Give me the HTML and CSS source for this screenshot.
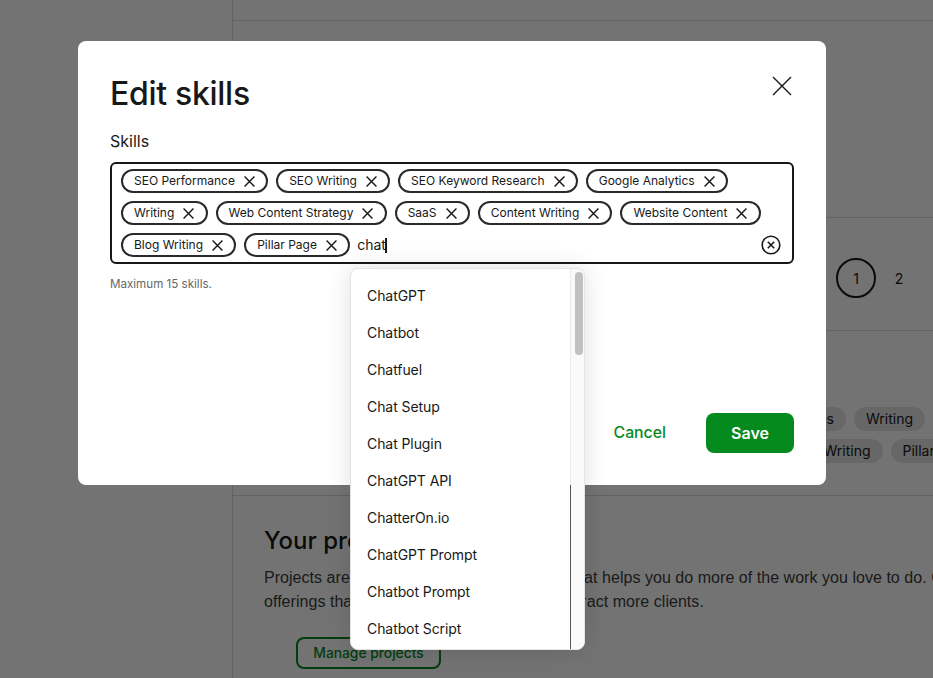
FILE: index.html
```html
<!DOCTYPE html>
<html lang="en">
<head>
<meta charset="utf-8">
<title>Edit skills</title>
<link rel="stylesheet" href="styles.css">
</head>
<body>
<div class="page">
  <aside class="side"></aside>
  <main class="main">
    <section class="sec sec-top"></section>
    <section class="sec sec-a"></section>
    <section class="sec sec-pager">
      <span class="pg pg-on">1</span>
      <span class="pg">2</span>
    </section>
    <section class="sec sec-tags">
      <div class="bg-row bg-row-1">
        <span class="bg-tag">Google Analytics</span>
        <span class="bg-tag">Writing</span>
      </div>
      <div class="bg-row bg-row-2">
        <span class="bg-tag">Blog Writing</span>
        <span class="bg-tag">Pillar Page</span>
      </div>
    </section>
    <section class="sec sec-projects">
      <h2 class="proj-title">Your projects</h2>
      <p class="proj-text">Projects are a new way to earn on Upwork that helps you do more of the work you love to do. Create project<br>offerings that highlight your strengths and attract more clients.</p>
      <a class="btn-outline">Manage projects</a>
    </section>
  </main>
</div>
<div class="overlay"></div>
<div class="modal" role="dialog" aria-label="Edit skills">
  <header class="modal-head">
    <h1 class="modal-title">Edit skills</h1>
    <button class="close" aria-label="Close">
      <svg width="20" height="20" viewBox="0 0 20 20"><path d="M1 1l18 18M19 1L1 19" fill="none" stroke="#181818" stroke-width="1.4"/></svg>
    </button>
  </header>
  <label class="label">Skills</label>
  <div class="box">
    <div class="chips">
      <span class="chip">SEO Performance<svg class="x" viewBox="0 0 10 10"><path d="M.5.5l9 9M9.5.5l-9 9"/></svg></span>
      <span class="chip">SEO Writing<svg class="x" viewBox="0 0 10 10"><path d="M.5.5l9 9M9.5.5l-9 9"/></svg></span>
      <span class="chip">SEO Keyword Research<svg class="x" viewBox="0 0 10 10"><path d="M.5.5l9 9M9.5.5l-9 9"/></svg></span>
      <span class="chip">Google Analytics<svg class="x" viewBox="0 0 10 10"><path d="M.5.5l9 9M9.5.5l-9 9"/></svg></span>
      <span class="chip">Writing<svg class="x" viewBox="0 0 10 10"><path d="M.5.5l9 9M9.5.5l-9 9"/></svg></span>
      <span class="chip">Web Content Strategy<svg class="x" viewBox="0 0 10 10"><path d="M.5.5l9 9M9.5.5l-9 9"/></svg></span>
      <span class="chip">SaaS<svg class="x" viewBox="0 0 10 10"><path d="M.5.5l9 9M9.5.5l-9 9"/></svg></span>
      <span class="chip">Content Writing<svg class="x" viewBox="0 0 10 10"><path d="M.5.5l9 9M9.5.5l-9 9"/></svg></span>
      <span class="chip">Website Content<svg class="x" viewBox="0 0 10 10"><path d="M.5.5l9 9M9.5.5l-9 9"/></svg></span>
      <span class="chip">Blog Writing<svg class="x" viewBox="0 0 10 10"><path d="M.5.5l9 9M9.5.5l-9 9"/></svg></span>
      <span class="chip">Pillar Page<svg class="x" viewBox="0 0 10 10"><path d="M.5.5l9 9M9.5.5l-9 9"/></svg></span>
      <span class="typed">chat<i class="caret"></i></span>
    </div>
    <button class="clear" aria-label="Clear">
      <svg width="20" height="20" viewBox="0 0 20 20"><circle cx="10" cy="10" r="8.8" fill="none" stroke="#181818" stroke-width="1.6"/><path d="M6.8 6.8l6.4 6.4M13.2 6.8l-6.4 6.4" fill="none" stroke="#181818" stroke-width="1.6"/></svg>
    </button>
  </div>
  <p class="hint">Maximum 15 skills.</p>
  <footer class="modal-foot">
    <a class="cancel">Cancel</a>
    <button class="save">Save</button>
  </footer>
  <div class="drop">
    <ul class="drop-list">
      <li>ChatGPT</li>
      <li>Chatbot</li>
      <li>Chatfuel</li>
      <li>Chat Setup</li>
      <li>Chat Plugin</li>
      <li>ChatGPT API</li>
      <li>ChatterOn.io</li>
      <li>ChatGPT Prompt</li>
      <li>Chatbot Prompt</li>
      <li>Chatbot Script</li>
    </ul>
    <div class="track"><div class="thumb"></div><div class="track-edge"></div></div>
  </div>
</div>
</body>
</html>
```

FILE: styles.css
```css
* { box-sizing: border-box; }
html, body { margin: 0; padding: 0; height: 100%; overflow: hidden; background: #fff; }
body { font-family: Inter, "Liberation Sans", sans-serif; color: #181818; position: relative; }

.page { display: flex; height: 678px; overflow: hidden; }
.side { width: 232px; flex: none; }
.main { flex: 1; border-left: 1px solid #d9d9d9; min-width: 0; }
.sec { border-bottom: 1px solid #d9d9d9; }
.sec-top { height: 21px; }
.sec-a { height: 197px; }
.sec-pager { height: 113px; padding: 40px 0 0 603px; display: flex; align-items: flex-start; gap: 3px; font-size: 14px; }
.pg { width: 40px; height: 40px; border-radius: 50%; display: flex; align-items: center; justify-content: center; }
.pg-on { border: 2px solid #181818; }
.sec-tags { height: 165px; padding: 76px 0 0 0; overflow: hidden; }
.bg-row { display: flex; gap: 8px; height: 32px; white-space: nowrap; }
.bg-row-1 { padding-left: 477px; }
.bg-row-2 { padding-left: 545px; }
.bg-tag { height: 24px; padding: 0 12px; line-height: 24px; border-radius: 12px; background: #e4e4e4; font-size: 14px; }
.sec-projects { border: 0; padding: 30px 0 0 31px; }
.proj-title { margin: 0; font-size: 24px; line-height: 30px; font-weight: 500; }
.proj-text { margin: 10px 0 0; font-family: "Liberation Sans", Arial, sans-serif; font-size: 16px; line-height: 24px; width: 760px; color: #3c3c3c; letter-spacing: .04px; white-space: nowrap; }
.btn-outline { display: block; width: 145px; height: 32px; margin: 23px 0 0 32px; border: 2px solid #058a1e; border-radius: 8px; color: #058a1e; font-size: 13.8px; font-weight: 500; line-height: 29px; text-align: center; }

.overlay { position: absolute; inset: 0; background: rgba(0,0,0,.55); }

.modal { position: absolute; left: 78px; top: 41px; width: 748px; height: 444px; background: #fff; border-radius: 8px; padding: 32px; }
.modal-head { display: flex; justify-content: space-between; align-items: flex-start; height: 40px; padding-top: 1px; }
.modal-title { margin: 0; font-size: 32px; line-height: 40px; font-weight: 500; letter-spacing: -.3px; }
.close { border: 0; background: none; padding: 0; width: 20px; height: 20px; margin: 2px 2px 0 0; }
.label { display: block; margin-top: 18px; font-size: 16px; line-height: 20px; }
.box { margin-top: 11px; height: 102px; border: 2px solid #181818; border-radius: 6px; padding: 5px 11px 0 9px; display: flex; align-items: flex-end; position: relative; }
.chips { flex: 1; display: flex; flex-wrap: wrap; gap: 8px; align-self: flex-start; }
.chip { height: 24px; border: 2px solid #2a2a2a; border-radius: 12px; padding: 0 11.2px 1px 11px; display: flex; align-items: center; gap: 9px; font-size: 12px; color: #181818; white-space: nowrap; }
.x { width: 11px; height: 11px; fill: none; stroke: #181818; stroke-width: 1.3; margin-top: 1px; }
.typed { font-size: 14px; line-height: 24px; display: flex; align-items: center; margin-left: -1px; }
.caret { display: block; width: 1.5px; height: 15px; margin-left: -.5px; background: #181818; }
.clear { border: 0; background: none; padding: 0; width: 20px; height: 20px; flex: none; margin: 0 0 7px -20px; }
.hint { margin: 12px 0 0; font-size: 11.6px; line-height: 16px; color: #676767; }
.modal-foot { position: absolute; right: 32px; bottom: 32px; display: flex; align-items: center; gap: 40px; }
.cancel { color: #058a1e; font-size: 15.8px; line-height: 20px; font-weight: 500; }
.save { width: 88px; height: 40px; border: 0; border-radius: 8px; background: #058a1e; color: #fff; font: 600 16px Inter, "Liberation Sans", sans-serif; }

.drop { position: absolute; left: 272px; top: 227px; width: 235px; height: 382px; background: #fff; border: 1px solid #e4e4e4; border-radius: 8px; box-shadow: 0 0 24px rgba(0,0,0,.12); overflow: hidden; display: flex; }
.drop-list { list-style: none; margin: 0; padding: 8px 0 0 16px; flex: 1; min-width: 0; letter-spacing: -.08px; }
.drop-list li { height: 37px; line-height: 37px; font-size: 14px; }
.track { width: 14px; flex: none; background: #fafafa; border-left: 1px solid #ececec; padding: 3px 1px 0 4px; position: relative; }
.thumb { height: 83px; border-radius: 4px; background: #c1c1c1; }
.track-edge { position: absolute; left: -1px; top: 216px; bottom: 0; width: 1px; background: #555; }
```
